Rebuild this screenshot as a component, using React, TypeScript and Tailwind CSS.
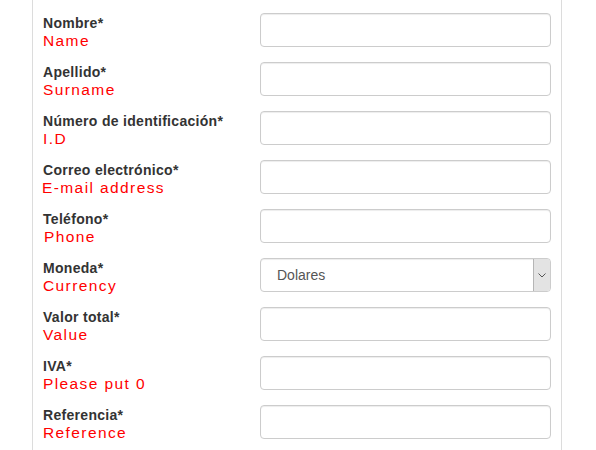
import React from "react";

const fields = [
  { label: "Nombre*", hint: "Name" },
  { label: "Apellido*", hint: "Surname" },
  { label: "Número de identificación*", hint: "I.D" },
  { label: "Correo electrónico*", hint: "E-mail address", shift: "ml-[-1px]" },
  { label: "Teléfono*", hint: "Phone", shift: "ml-[1px]" },
  { label: "Moneda*", hint: "Currency", select: true },
  { label: "Valor total*", hint: "Value" },
  { label: "IVA*", hint: "Please put 0" },
  { label: "Referencia*", hint: "Reference" },
];

export default function App() {
  return (
    <div className="min-h-[450px] w-[596px] bg-white font-['Liberation_Sans',Arial,sans-serif]">
      <div className="ml-[32px] min-h-[450px] w-[530px] border-x border-[#dcdcdc] pl-[10px] pt-[13px]">
        {fields.map((f) => (
          <div key={f.label} className="flex h-[49px] items-start">
            <div className="w-[217px] pt-[2px]">
              <div className="text-[14px] font-bold leading-[16px] tracking-[0.3px] text-[#333]">{f.label}</div>
              <div className={`mt-[1px] text-[15.5px] leading-[17px] tracking-[1.4px] text-[#ff0000] ${f.shift ?? ""}`}>
                {f.hint}
              </div>
            </div>
            {f.select ? (
              <div className="relative h-[34px] w-[291px]">
                <select className="h-[34px] w-full appearance-none rounded-[4px] border border-[#ccc] bg-white pl-[16px] text-[14px] text-[#555] shadow-[inset_0_1px_1px_rgba(0,0,0,0.075)] outline-none">
                  <option>Dolares</option>
                </select>
                <div className="absolute right-[1px] top-[1px] flex h-[32px] w-[17px] items-center justify-center rounded-r-[3px] border-l border-[#b5b5b5] bg-[#e3e3e3]">
                  <svg width="8" height="5" viewBox="0 0 8 5" fill="none">
                    <path d="M0.5 0.5 L4 4 L7.5 0.5" stroke="#555" strokeWidth="1" />
                  </svg>
                </div>
              </div>
            ) : (
              <input className="h-[34px] w-[291px] rounded-[4px] border border-[#ccc] bg-white px-3 text-[14px] shadow-[inset_0_1px_1px_rgba(0,0,0,0.075)] outline-none" />
            )}
          </div>
        ))}
      </div>
    </div>
  );
}
